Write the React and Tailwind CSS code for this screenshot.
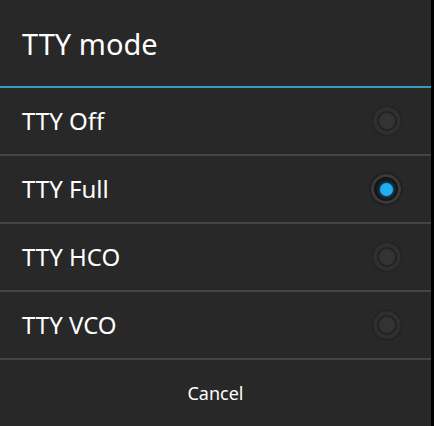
const options = [
    { label: "TTY Off", checked: false },
    { label: "TTY Full", checked: true },
    { label: "TTY HCO", checked: false },
    { label: "TTY VCO", checked: false },
];

const Radio = ({ checked }) => {
    if (checked) {
        return (
            <div className="w-[30px] h-[30px] rounded-full bg-[#3a3a3a] flex items-center justify-center shadow-[0_0_3px_rgba(0,0,0,0.8)]">
                <div className="w-[24px] h-[24px] rounded-full bg-[#151515] flex items-center justify-center">
                    <div className="w-[13px] h-[13px] rounded-full bg-[#22aef0] shadow-[0_0_4px_#1a8fd0]" />
                </div>
            </div>
        );
    }
    return (
        <div className="w-[28px] h-[28px] rounded-full bg-[#2f2f2f] flex items-center justify-center shadow-[0_0_2px_rgba(0,0,0,0.6)]">
            <div className="w-[20px] h-[20px] rounded-full border-2 border-[#222] bg-[#333]" />
        </div>
    );
};

export default function App() {
    return (
        <div className="w-[434px] h-[426px] flex bg-black" style={{ fontFamily: '"Noto Sans", "Open Sans", sans-serif' }}>
            <div className="w-[431px] h-full bg-[#282828] flex flex-col text-white">
                <div className="h-[86px] flex items-center pl-[22px] text-[29px] leading-none">
                    TTY mode
                </div>
                <div className="h-[2px] bg-[#3a9bbf]" />
                {options.map(opt => (
                    <div key={opt.label} className="h-[68px] flex flex-col">
                        <div className="h-[66px] flex items-center justify-between pl-[22px] pr-[30px]">
                            <span className="text-[24px] leading-none">{opt.label}</span>
                            <Radio checked={opt.checked} />
                        </div>
                        <div className="h-[2px] bg-[#454545]" />
                    </div>
                ))}
                <div className="flex-1 flex items-center justify-center text-[18px] leading-none">
                    Cancel
                </div>
            </div>
        </div>
    );
}
